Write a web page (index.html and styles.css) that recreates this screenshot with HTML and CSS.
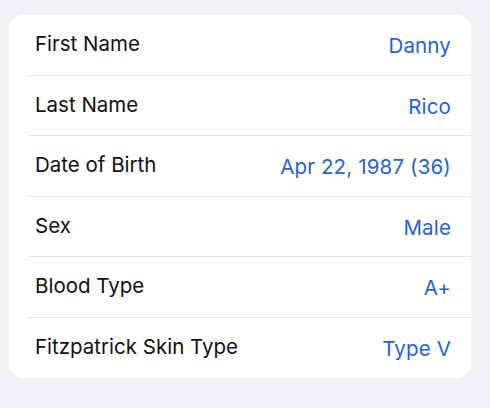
FILE: index.html
```html
<!DOCTYPE html>
<html>
<head>
<meta charset="utf-8">
<link rel="stylesheet" href="styles.css">
</head>
<body>
<div class="card">
  <div class="row"><span class="label">First Name</span><span class="value">Danny</span></div>
  <div class="row"><span class="label">Last Name</span><span class="value">Rico</span></div>
  <div class="row"><span class="label">Date of Birth</span><span class="value">Apr 22, 1987 (36)</span></div>
  <div class="row"><span class="label">Sex</span><span class="value">Male</span></div>
  <div class="row"><span class="label">Blood Type</span><span class="value">A+</span></div>
  <div class="row"><span class="label">Fitzpatrick Skin Type</span><span class="value">Type V</span></div>
</div>
</body>
</html>
```
FILE: styles.css
```css
html, body {
  margin: 0;
  padding: 0;
  background: #f1f1f6;
  width: 490px;
  height: 408px;
  overflow: hidden;
}
body {
  padding: 15px 19px 0 9px;
  box-sizing: border-box;
  font-family: Inter, "Noto Sans", sans-serif;
}
.card {
  background: #ffffff;
  border-radius: 14px;
  padding-left: 20px;
  overflow: hidden;
}
.row {
  display: flex;
  justify-content: space-between;
  align-items: center;
  height: 60.5px;
  box-sizing: border-box;
  padding: 0 20px 0 6px;
  border-bottom: 1px solid #e2e2e7;
  font-size: 20.5px;
}
.row:last-child {
  border-bottom: none;
}
.label {
  color: #111111;
  position: relative;
  top: -1px;
}
.value {
  color: #1f63d6;
  letter-spacing: 0.15px;
  position: relative;
  top: 1px;
}
```
